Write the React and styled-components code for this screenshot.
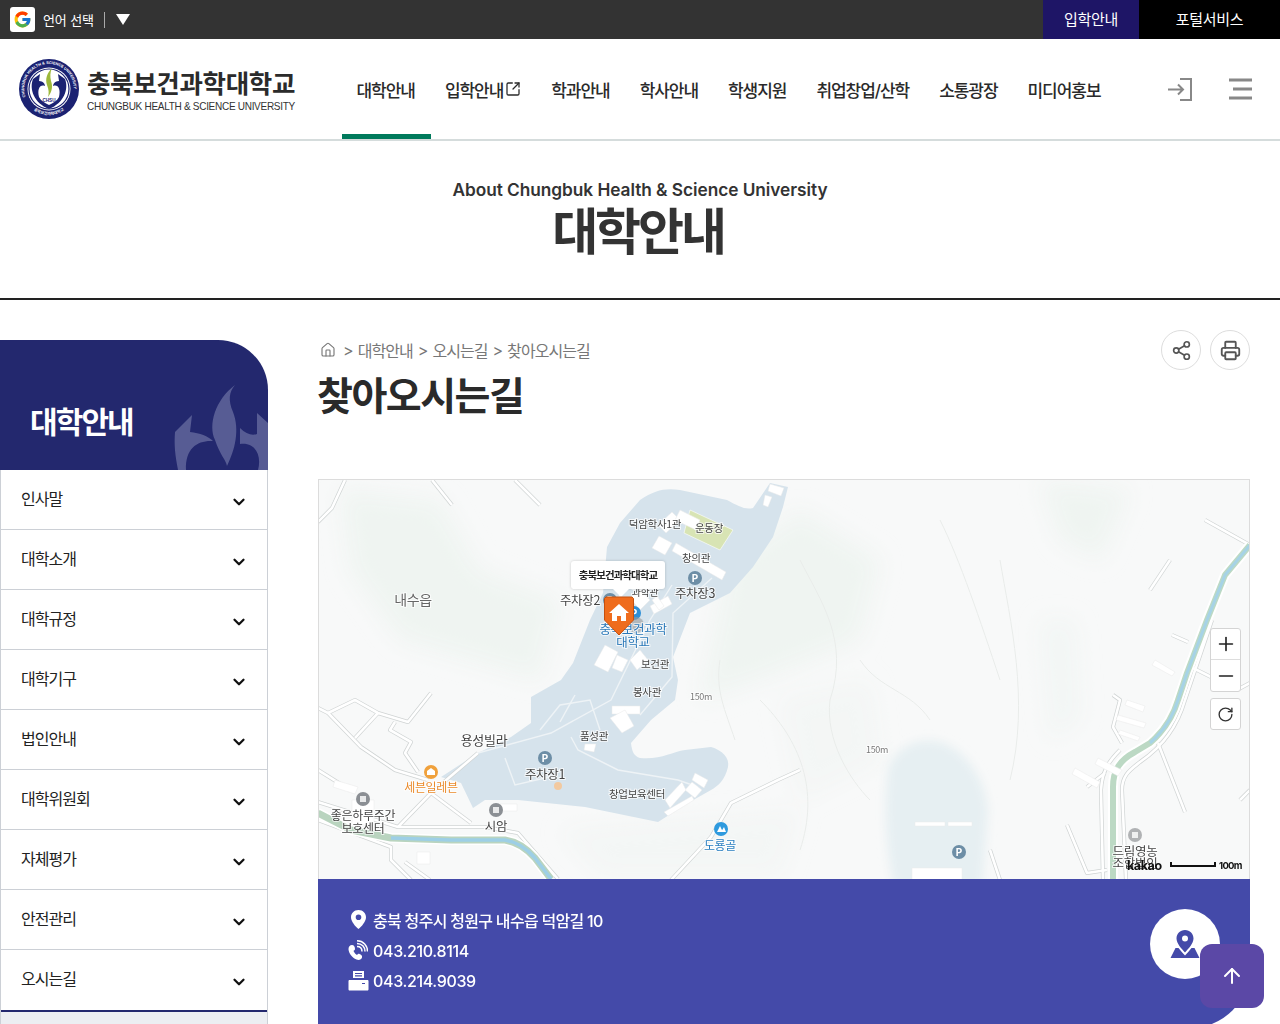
import React from 'react';
import styled, { createGlobalStyle } from 'styled-components';
import { FcGoogle } from 'react-icons/fc';
import { ChevronDown, Home, Share2, Printer, SquareArrowOutUpRight, Plus, Minus, RotateCw, ArrowUp } from 'lucide-react';

const Global = createGlobalStyle`
  html, body { margin: 0; padding: 0; background: #fff; overflow-x: hidden; }
  body { font-family: Inter, "Noto Sans CJK KR", "Noto Sans", sans-serif; color: #222; }
  #root { height: 1024px; overflow: hidden; }
  * { box-sizing: border-box; }
`;

const TopBar = styled.div`display: flex; align-items: stretch; height: 39px; background: #333; color: #fff;`;
const Lang = styled.div`display: flex; align-items: center; padding-left: 10px; flex: 1;`;
const GBox = styled.span`width: 25px; height: 25px; background: #fff; border-radius: 3px; display: flex; align-items: center; justify-content: center; font-size: 19px;`;
const LangText = styled.span`font-size: 13px; margin-left: 8px; letter-spacing: -0.15px; white-space: nowrap; padding-bottom: 1px;`;
const LangSep = styled.span`width: 1px; height: 16px; background: #aaa; margin: 0 11px 0 10px;`;
const Tri = styled.span`width: 0; height: 0; border-left: 7px solid transparent; border-right: 7px solid transparent; border-top: 11px solid #fff;`;
const TopLink = styled.a`display: flex; align-items: center; justify-content: center; width: ${p => p.$w}px; background: ${p => p.$bg}; font-size: 15px; letter-spacing: -0.3px; color: #fff; padding-bottom: 2px;`;

const Header = styled.header`display: flex; align-items: center; height: 102px; border-bottom: 2px solid #d5dcdc; padding-left: 19px; position: relative;`;
const LogoWrap = styled.div`display: flex; align-items: center; width: 322px; flex: none; height: 60px;`;
const LogoText = styled.div`margin-left: 8px; display: flex; flex-direction: column; margin-top: 1px;`;
const LogoKo = styled.span`font-size: 25.5px; font-weight: 700; color: #2b2b2b; line-height: 30px; letter-spacing: -0.35px; white-space: nowrap; font-family: "Noto Sans CJK KR", sans-serif;`;
const LogoEn = styled.span`font-family: "Liberation Sans", sans-serif; font-size: 11.6px; color: #333; line-height: 14px; letter-spacing: -0.35px; white-space: nowrap; transform: scaleX(.865); transform-origin: left center; margin-top: 2px;`;
const Nav = styled.nav`display: flex; height: 100px; flex: 1; margin-left: 0.5px;`;
const NavItem = styled.a`
  display: flex; align-items: center; height: 100px; padding: 0 15px; font-size: 17px; font-weight: 500; letter-spacing: -1.05px; color: #2a2a2a; white-space: nowrap; position: relative;
  ${p => p.$active && `&::after { content: ''; position: absolute; left: 0; right: -1px; bottom: 0; height: 5px; background: #007a5c; }`}
`;
const HeaderIcons = styled.div`display: flex; align-items: center; gap: 36px; padding-right: 28px;`;

const TitleBlock = styled.section`height: 159px; border-bottom: 2px solid #222; display: flex; flex-direction: column; align-items: center; padding-top: 36px;`;
const TitleEn = styled.p`margin: 0; font-size: 17.3px; font-weight: 600; color: #333; line-height: 26px; letter-spacing: -0.05px;`;
const TitleKo = styled.h1`margin: 0 4px 0 0; font-size: 50px; font-weight: 700; color: #333; line-height: 56px; letter-spacing: -3.1px; padding-top: 1px;`;

const Content = styled.div`display: flex; margin-top: 40px; align-items: flex-start;`;
const Side = styled.aside`width: 268px; flex: none;`;
const SideHead = styled.div`height: 130px; background: #23286e; border-top-right-radius: 50px; position: relative; overflow: hidden; display: flex; align-items: flex-end; padding: 0 0 26px 30px;`;
const SideTitle = styled.h2`margin: 0; color: #fff; font-size: 30px; font-weight: 700; line-height: 44px; letter-spacing: -1.9px; position: relative;`;
const Mark = styled.svg`position: absolute; left: 0; top: 0;`;
const SideList = styled.ul`list-style: none; margin: 0; padding: 0; border-left: 1px solid #ccd0d6; border-right: 1px solid #ccd0d6;`;
const SideItem = styled.li`height: ${p => p.$open ? '62px' : '60px'}; display: flex; align-items: center; justify-content: space-between; padding: ${p => p.$open ? '0 19px 4px 20px' : '0 19px 3px 20px'}; font-size: 16px; letter-spacing: -1px; color: #222; border-bottom: ${p => p.$open ? '2px solid #23286e' : '1px solid #ccd0d6'};
  svg { margin-top: 7px; }
`;
const SubItem = styled.li`background: #eceef2; padding: 8px 20px; height: 44px; font-size: 15px; color: #444; letter-spacing: -0.6px;`;

const Main = styled.main`width: 932px; margin-left: 50px; margin-top: -10px; flex: none;`;
const CrumbRow = styled.div`display: flex; align-items: center; justify-content: space-between; height: 40px;`;
const Crumbs = styled.div`display: flex; align-items: center; gap: 5px; color: #777; font-size: 16px; letter-spacing: -0.95px; svg { margin-left: 2px; margin-right: 2px; }`;
const ActionRow = styled.div`display: flex; gap: 9px;`;
const Round = styled.button`width: 40px; height: 40px; border-radius: 50%; border: 1px solid #ddd; background: #fff; display: flex; align-items: center; justify-content: center; color: #555; padding: 0;`;
const PageTitle = styled.h2`margin: 0 0 0 -1px; font-size: 39px; font-weight: 700; color: #2a2a2a; line-height: 50px; letter-spacing: -1.5px; padding-top: 1px;`;

const MapFrame = styled.div`position: relative; height: 400px; margin-top: 58px; border: 1px solid #dcdcdc; border-bottom: 0; overflow: hidden; background: #f8f9f9;`;
const MapSvg = styled.svg`display: block; position: absolute; left: -1px; top: -1px;`;
const Tip = styled.div`position: absolute; left: 252px; top: 81px; width: 94px; height: 28px; background: #fff; border-radius: 3px; box-shadow: 0 0 3px rgba(0,0,0,.2); font-size: 10.5px; font-weight: 700; color: #222; letter-spacing: -0.95px; display: flex; align-items: center; justify-content: center; padding-bottom: 2px;
  &::after { content: ''; position: absolute; left: 42px; bottom: -8px; border-left: 8px solid transparent; border-right: 8px solid transparent; border-top: 8px solid #fff; }
`;
const Pin = styled.svg`position: absolute; left: 285px; top: 116px;`;
const ZoomBox = styled.div`position: absolute; left: 891px; top: 148px; width: 31px; border: 1px solid #d4d4d4; border-radius: 3px; background: #fff; display: flex; flex-direction: column;`;
const ZoomBtn = styled.span`height: 31px; display: flex; align-items: center; justify-content: center; color: #222; border-bottom: ${p => p.$line ? '1px solid #ddd' : '0'};`;
const ResetBox = styled(ZoomBox)`top: 218px; height: 32px; align-items: center; justify-content: center; color: #333;`;

const Panel = styled.div`height: 149px; background: #444aa9; border-bottom-right-radius: 60px; position: relative; padding: 29px 30px; color: #fff; display: flex; flex-direction: column; gap: 6.5px;`;
const InfoRow = styled.div`display: flex; align-items: center; height: 24px; font-size: 16px; font-weight: 500; letter-spacing: ${p => p.$ko ? '-0.7px' : '-0.35px'};`;
const InfoIcon = styled.svg`width: 21px; height: 22px; flex: none; margin-right: 4px;`;
const Badge = styled.div`position: absolute; left: 832px; top: 30px; width: 70px; height: 70px; border-radius: 50%; background: #fff; display: flex; align-items: center; justify-content: center;`;
const TopBtn = styled.button`position: fixed; left: 1200px; top: 944px; width: 64px; height: 64px; border-radius: 12px; border: 0; background: #5b48a6; color: #fff; display: flex; align-items: center; justify-content: center; padding: 0;`;

const roads = [
  'M318 708L328 713L361 747L395 770L428 780', 'M328 713L355 700L378 713L408 722L431 693', 'M378 713L355 738',
  'M395 722L390 730L411 742L405 753L418 772', 'M398 827L431 793L478 753', 'M431 793L471 823',
  'M318 802L398 827L485 827L518 833L558 879', 'M318 820L391 847L391 860L411 880', 'M671 880L711 837L731 803L778 780L800 770',
  'M345 480L332 508L318 522', 'M432 480L452 505', 'M515 480L540 505', 'M1113 695L1120 700L1113 727L1122 743', 'M1087 787L1105 773',
  'M1158 743L1185 812', 'M1067 825L1087 873L1107 870', 'M1172 635L1188 642', 'M1193 668L1237 690L1250 683',
  'M1205 520L1250 545', 'M1103 880L1101 790C1102 770 1110 760 1120 750', 'M1126 880L1122 790C1122 775 1130 770 1140 762C1165 745 1178 725 1185 700L1212 620',
  'M318 770L350 790', 'M1240 800L1250 790', 'M430 880L405 862', 'M1000 880L990 850',
  'M1170 560L1150 590'
];
const campusRoads = [
  'M478 753L551 733L611 700L650 620L672 585', 'M571 737L578 750L618 770L678 780L698 787', 'M505 758L515 785L558 775',
  'M712 578L673 613L672 677L640 715', 'M540 730L560 705L590 700L600 730', 'M615 605L630 575', 'M560 722L575 695',
];
const buildings = [
  'M658 525L672 512L680 520L666 533Z', 'M659 536L672 543L665 555L652 548Z', 'M676 543L726 572L722 580L672 551Z', 'M680 510L700 520L696 530L675 520Z',
  'M605 645L618 652L608 672L594 665Z', 'M617 655L628 660L622 672L612 668Z', 'M650 606L668 596L672 604L654 614Z', 'M657 596L664 606L659 610L652 600Z',
  'M630 598L640 590L650 600L640 610Z', 'M612 706L640 706L640 714L612 714Z', 'M610 718L625 710L634 726L622 733Z', 'M630 660L640 650L648 660L637 670Z',
  'M685 790L692 782L702 790L695 798Z', 'M665 800L682 782L686 790L670 808Z', 'M664 812L692 796L694 800L668 816Z', 'M695 773L708 780L704 788L692 780Z',
  'M585 744L596 744L594 752L584 750Z', 'M770 484L784 488L781 496L768 491Z', 'M765 495L772 497L768 507L763 505Z',
  'M335 780L358 787L355 794L333 787Z', 'M417 852L430 852L430 864L417 864Z', 'M500 804L517 804L517 811L500 811Z', 'M352 800L374 800L374 825L352 825Z',
  'M1098 758L1122 770L1118 776L1095 764Z', 'M1075 768L1100 782L1097 788L1072 774Z', 'M1127 700L1145 706L1143 712L1125 705Z', 'M1118 715L1146 723L1144 728L1116 720Z',
  'M1120 730L1140 737L1138 741L1118 734Z', 'M1155 660L1175 672L1172 676L1152 665Z', 'M915 822L945 822L945 826L915 826Z', 'M948 822L972 822L972 826L948 826Z', 'M912 868L962 868L962 880L912 880Z',
];
const labels = [
  ['덕암학사1관', 655, 528, 10.5], ['운동장', 709, 532, 10.5], ['창의관', 696, 562, 10.5], ['주차장3', 695, 598, 12.5],
  ['내수읍', 413, 605, 14, '#666'], ['주차장2', 580, 605, 12.5], ['보건관', 655, 668, 10.5],
  ['봉사관', 647, 696, 10.5], ['150m', 701, 700, 9, '#777'], ['150m', 877, 753, 9, '#777'], ['용성빌라', 484, 745, 13], ['품성관', 594, 740, 10.5],
  ['주차장1', 545, 779, 12.5], ['세븐일레븐', 431, 792, 12, '#ea8a2a'], ['좋은하루주간', 363, 820, 12], ['보호센터', 363, 833, 12],
  ['시암', 496, 831, 12.5], ['창업보육센터', 637, 798, 10.5], ['도룡골', 720, 850, 12, '#2a7fc0'], ['드림영농', 1135, 856, 12.5], ['조합법인', 1135, 868, 12.5],
  ['과학관', 645, 596, 10],
];
const MapTxt = styled.text`font-family: "Noto Sans CJK KR", sans-serif; text-anchor: middle; paint-order: stroke; stroke: rgba(255,255,255,.75); stroke-width: 2px; letter-spacing: -0.3px;`;
const Kakao = styled.text`font-family: Inter, sans-serif; font-weight: 700;`;

function PoiDot({ x, y, fill, r = 7, glyph = 'P' }) {
  return <g><circle cx={x} cy={y} r={r} fill={fill} />
    {glyph === 'P' ? <text x={x} y={y + 3.6} fontSize="10" fontWeight="700" fill="#fff" textAnchor="middle" fontFamily="Inter">P</text>
      : <rect x={x - 3} y={y - 3} width="6" height="6" fill="#fff" opacity=".8" />}</g>;
}

const leftRiver = 'M318 813L351 830L391 838L451 840L505 840C518 842 528 850 535 858L551 879';
const rightRiver = 'M1113 879L1113 787C1113 770 1120 760 1135 752L1150 743C1165 730 1173 717 1178 700L1187 673L1207 620L1225 575L1250 545';

function MapDrawing() {
  return (
    <MapSvg width="932" height="400" viewBox="318 479 932 400">
      <defs>
        <filter id="soft" x="-20%" y="-20%" width="140%" height="140%"><feGaussianBlur stdDeviation="11" /></filter>
        <filter id="pond" x="-10%" y="-10%" width="120%" height="120%"><feGaussianBlur stdDeviation="5" /></filter>
      </defs>
      <rect x="318" y="479" width="932" height="400" fill="#f8f9f9" />
      <g filter="url(#soft)" fill="#eff4f1">
        <path d="M340 490L440 500L480 570L560 600L540 680L470 660L400 640L350 570Z" />
        <path d="M730 560L800 510L880 560L860 640L760 680L700 700Z" />
        <path d="M1040 480L1130 490L1100 560L1060 540Z" />
        <path d="M1040 620L1075 620L1080 720L1050 740Z" opacity=".6" />
        <path d="M560 830L800 810L780 875L600 875Z" opacity=".5" />
        <path d="M780 700L870 680L880 760L800 800Z" opacity=".5" />
      </g>
      <path d="M640 500C655 490 665 488 680 490L727 500C738 506 745 510 753 508L770 483L788 487L783 507L773 537L753 567L730 593L690 613L673 657L678 680L675 700L651 720L631 743C632 752 634 756 640 758C660 760 672 752 685 750L711 747C722 750 730 758 728 767C725 780 718 786 711 790L688 803L658 822L585 807L518 800L485 800L473 808L461 783L441 777L478 753L511 737L531 723L531 697L561 680L573 663L590 620L603 593L607 547L620 523Z" fill="#d6e3ec" />
      <path filter="url(#pond)" d="M888 770C892 752 915 735 940 742C962 748 985 775 988 810L982 890L895 890C885 850 884 800 888 770Z" fill="#e6eff2" />
      <path d="M690 510L733 530L720 550L684 533Z" fill="#d8e4b4" stroke="#fff" strokeWidth=".6" />
      <g fill="none" stroke="#e9ecea" strokeWidth="1">
        <path d="M800 560C820 600 850 640 830 700C825 740 850 780 870 800" />
        <path d="M860 660C880 690 910 690 930 720" />
        <path d="M720 660C715 690 725 710 735 740" />
        <path d="M1000 560C1010 620 1030 700 1010 780" />
        <path d="M940 520C960 560 980 620 1000 680" />
        <path d="M760 700C800 740 820 790 800 850" />
      </g>
      {roads.map((d, i) => <path key={i} d={d} fill="none" stroke="#cfd3d3" strokeWidth="4" strokeLinejoin="round" />)}
      {roads.map((d, i) => <path key={i} d={d} fill="none" stroke="#fff" strokeWidth="2.6" strokeLinejoin="round" />)}
      <g fill="none" strokeLinejoin="round" strokeLinecap="butt">
        <path d={leftRiver} stroke="#fff" strokeWidth="10" />
        <path d={leftRiver} stroke="#b9d4bf" strokeWidth="7" />
        <path d="M391 838L451 840L505 840C518 842 528 850 535 858L551 879" stroke="#9dcfe6" strokeWidth="3.5" />
        <path d={rightRiver} stroke="#fff" strokeWidth="10" />
        <path d={rightRiver} stroke="#bcd9c4" strokeWidth="6" />
        <path d="M1150 743C1165 730 1173 717 1178 700L1187 673L1207 620L1225 575L1250 545" stroke="#a6d3e6" strokeWidth="3" />
      </g>
      {campusRoads.map((d, i) => <path key={i} d={d} fill="none" stroke="#eef3f6" strokeWidth="1.4" />)}
      {buildings.map((d, i) => <path key={i} d={d} fill="#fff" stroke="#e8e8e8" strokeWidth=".5" />)}
      <PoiDot x={695} y={578} fill="#6d8ea6" />
      <PoiDot x={545} y={758} fill="#6d8ea6" />
      <PoiDot x={959} y={852} fill="#6d8ea6" />
      <PoiDot x={610} y={600} fill="#6d8ea6" />
      <PoiDot x={634} y={613} fill="#2e8fd6" />
      <PoiDot x={363} y={799} fill="#8b8f94" glyph="b" />
      <PoiDot x={496} y={810} fill="#8b8f94" glyph="b" />
      <PoiDot x={1135} y={835} fill="#b0b2b4" glyph="b" />
      <circle cx="431" cy="772" r="7" fill="#f0a13c" />
      <path d="M427 775L427 771L431 768L435 771L435 775Z" fill="#fff" />
      <circle cx="558" cy="786" r="4" fill="#f2c9a0" />
      <circle cx="721" cy="829" r="7" fill="#2e9ade" />
      <path d="M717 832L720 826L723 832ZM721 832L724 827L726 832Z" fill="#fff" />
      <circle cx="636" cy="625" r="8" fill="#999" opacity=".6" />
      {labels.map(([t, x, y, s, c], i) => <MapTxt key={i} x={x} y={y} fontSize={s} fill={c || '#444'}>{t}</MapTxt>)}
      <MapTxt x={633} y={634} fontSize="12.5" fill="#2a78b8">충북보건과학</MapTxt>
      <MapTxt x={633} y={647} fontSize="12.5" fill="#2a78b8">대학교</MapTxt>
      <Kakao x={1127} y={870} fontSize="12.5" fill="#111" letterSpacing="-.4">kakao</Kakao>
      <path d="M1171 862V866H1215V862" fill="none" stroke="#111" strokeWidth="2" />
      <Kakao x={1219} y={869} fontSize="9.5" fill="#111" letterSpacing="-.7">100m</Kakao>
    </MapSvg>
  );
}

function Emblem() {
  return (
    <svg width="60" height="60" viewBox="0 0 60 60" style={{ flex: 'none' }}>
      <defs>
        <path id="arcTop" d="M6.6 38A24.8 24.8 0 1 1 53.4 38" />
        <path id="arcBot" d="M4 30a26 26 0 0 0 52 0" />
      </defs>
      <circle cx="30" cy="30" r="30" fill="#1b2272" />
      <circle cx="30" cy="30" r="21.5" fill="#fff" />
      <circle cx="30" cy="30" r="20" fill="none" stroke="#1b2272" strokeWidth="1.2" />
      <text fontSize="3.9" fill="#fff" fontFamily="Liberation Sans" fontWeight="700"><textPath href="#arcTop">CHUNGBUK HEALTH &amp; SCIENCE UNIVERSITY</textPath></text>
      <text fontSize="3.9" fill="#fff" fontFamily="Noto Sans CJK KR" fontWeight="700" textAnchor="middle"><textPath href="#arcBot" startOffset="50%">충북보건과학대학교</textPath></text>
      <path d="M14 20L21 15L20 22C24 22 26 25 26 27C21 25 18 30 20 38C22 42 26 44 30 46C34 44 38 42 40 38C42 30 39 25 34 27C34 25 36 22 40 22L39 15L46 20C50 30 45 44 30 50C15 44 10 30 14 20Z" fill="#1b2272" />
      <path d="M33 9C28 14 26 20 28 26C30 31 30 34 29 38C33 33 34 27 32 22C31 18 31 13 33 9Z" fill="#9db83a" />
      <text x="30" y="43" fontSize="4.6" fill="#1b2272" fontWeight="700" textAnchor="middle" fontFamily="Liberation Sans">CHSU</text>
    </svg>
  );
}

const sideItems = ['인사말', '대학소개', '대학규정', '대학기구', '법인안내', '대학위원회', '자체평가', '안전관리', '오시는길'];

export default function App() {
  return (
    <>
      <Global />
      <TopBar>
        <Lang>
          <GBox><FcGoogle /></GBox>
          <LangText>언어 선택</LangText>
          <LangSep />
          <Tri />
        </Lang>
        <TopLink $w={96} $bg="#1e1566">입학안내</TopLink>
        <TopLink $w={141} $bg="#000">포털서비스</TopLink>
      </TopBar>
      <Header>
        <LogoWrap>
          <Emblem />
          <LogoText>
            <LogoKo>충북보건과학대학교</LogoKo>
            <LogoEn>CHUNGBUK HEALTH &amp; SCIENCE UNIVERSITY</LogoEn>
          </LogoText>
        </LogoWrap>
        <Nav>
          <NavItem $active>대학안내</NavItem>
          <NavItem>입학안내<SquareArrowOutUpRight size={16} strokeWidth={1.9} style={{ marginLeft: 2 }} /></NavItem>
          <NavItem>학과안내</NavItem>
          <NavItem>학사안내</NavItem>
          <NavItem>학생지원</NavItem>
          <NavItem>취업창업/산학</NavItem>
          <NavItem>소통광장</NavItem>
          <NavItem>미디어홍보</NavItem>
        </Nav>
        <HeaderIcons>
          <svg width="24" height="24" viewBox="0 0 24 24" fill="none" stroke="#888" strokeWidth="2">
            <path d="M0 12.5H15M10 7.5L15 12.5L10 17.5M12 2H23V23H12" />
          </svg>
          <svg width="24" height="22" viewBox="0 0 24 22" fill="none" stroke="#888" strokeWidth="2.8">
            <path d="M1 2H24M5 11H24M1 20H24" />
          </svg>
        </HeaderIcons>
      </Header>
      <TitleBlock>
        <TitleEn>About Chungbuk Health &amp; Science University</TitleEn>
        <TitleKo>대학안내</TitleKo>
      </TitleBlock>
      <Content>
        <Side>
          <SideHead>
            <Mark width="268" height="130" viewBox="0 0 268 130" fill="#575c94">
              <path d="M235 45C215 60 208 85 215 100C220 115 226 120 227 126C235 110 240 90 233 72C228 60 229 52 235 45Z" />
              <path d="M175 92L192 75L190 92C200 93 208 96 213 101C198 100 185 108 186 130L178 130C175 115 174 105 175 92Z" />
              <path d="M240 88C246 94 252 96 257 94L257 73L268 83L268 130L258 130C262 115 255 102 240 104Z" />
            </Mark>
            <SideTitle>대학안내</SideTitle>
          </SideHead>
          <SideList>
            {sideItems.map((t, i) => (
              <SideItem key={t} $open={i === sideItems.length - 1}>
                {t}
                <ChevronDown size={18} strokeWidth={3} color="#111" />
              </SideItem>
            ))}
            <SubItem>찾아오시는길</SubItem>
          </SideList>
        </Side>
        <Main>
          <CrumbRow>
            <Crumbs>
              <Home size={16} strokeWidth={1.7} />
              <span>&gt;</span><span>대학안내</span>
              <span>&gt;</span><span>오시는길</span>
              <span>&gt;</span><span>찾아오시는길</span>
            </Crumbs>
            <ActionRow>
              <Round><Share2 size={21} strokeWidth={1.9} /></Round>
              <Round><Printer size={21} strokeWidth={2.1} /></Round>
            </ActionRow>
          </CrumbRow>
          <PageTitle>찾아오시는길</PageTitle>
          <MapFrame>
            <MapDrawing />
            <Tip>충북보건과학대학교</Tip>
            <Pin width="30" height="40" viewBox="0 0 30 40">
              <path d="M2 1H28L29.5 2.5V24L15 39L.5 24V2.5Z" fill="#ef6c1d" stroke="#c6500f" strokeWidth="1" />
              <path d="M15 8L25 17H22V25H17V20H13V25H8V17H5Z" fill="#fff" />
            </Pin>
            <ZoomBox>
              <ZoomBtn $line><Plus size={22} strokeWidth={1.8} /></ZoomBtn>
              <ZoomBtn><Minus size={22} strokeWidth={1.8} /></ZoomBtn>
            </ZoomBox>
            <ResetBox><RotateCw size={17} strokeWidth={1.9} /></ResetBox>
          </MapFrame>
          <Panel>
            <InfoRow $ko>
              <InfoIcon viewBox="0 0 21 22" fill="#fff" style={{ marginLeft: 0, marginRight: 4 }}>
                <path fillRule="evenodd" d="M10.5 1C6 1 3 4.4 3 8.2C3 12.6 7.5 17.5 10.5 20C13.5 17.5 18 12.6 18 8.2C18 4.4 15 1 10.5 1ZM10.5 5.5A2.8 2.8 0 1 1 10.5 11.1A2.8 2.8 0 1 1 10.5 5.5Z" />
              </InfoIcon>
              충북 청주시 청원구 내수읍 덕암길 10
            </InfoRow>
            <InfoRow>
              <InfoIcon viewBox="0 0 21 22" fill="#fff" style={{ marginLeft: -1, marginRight: 5 }}>
                <path d="M5 5C7 5 8 7 8 9C8 10 7 10.5 6.5 11C7.5 13 8.5 14 10 15C10.5 14.5 11.5 13.5 12.5 14C14 14.5 15.5 15.5 15 17.5C14.5 19.5 12 20.5 9.5 19.5C5 17.5 2 13.5 1.5 9.5C1.2 7 3 5 5 5Z" />
                <path d="M10 6.5C13 6.5 15 8.5 15 11.5M10 3.5C15 3.5 18 7 18 11.5M10 .8C16.5 .8 20.5 5.5 20.5 11.5" fill="none" stroke="#fff" strokeWidth="1.5" />
              </InfoIcon>
              043.210.8114
            </InfoRow>
            <InfoRow>
              <InfoIcon viewBox="0 0 21 22" fill="#fff" style={{ marginLeft: 0, marginRight: 4 }}>
                <path d="M5 1H16V8H5ZM1.5 10H19.5C20 10 20.5 10.5 20.5 11V19.5C20.5 20 20 20.5 19.5 20.5H1.5C1 20.5 .5 20 .5 19.5V11C.5 10.5 1 10 1.5 10Z" />
                <path d="M7 3.5H14M7 5.8H14M14 13.5H17" stroke="#444aa9" strokeWidth="1.2" />
              </InfoIcon>
              043.214.9039
            </InfoRow>
            <Badge>
              <svg width="30" height="30" viewBox="0 0 30 30" fill="#444aa9">
                <path fillRule="evenodd" d="M15 1C10 1 6.5 5 6.5 9.5C6.5 14.5 11.5 19.5 15 23.5C18.5 19.5 23.5 14.5 23.5 9.5C23.5 5 20 1 15 1ZM15 6.5A3 3 0 1 1 15 12.5A3 3 0 1 1 15 6.5Z" />
                <path d="M5.5 19H8.5C10.5 21.5 12.5 24 15 26.5C17.5 24 19.5 21.5 21.5 19H24.5L29.5 29H.5Z" />
              </svg>
            </Badge>
          </Panel>
        </Main>
      </Content>
      <TopBtn><ArrowUp size={24} strokeWidth={2} /></TopBtn>
    </>
  );
}
